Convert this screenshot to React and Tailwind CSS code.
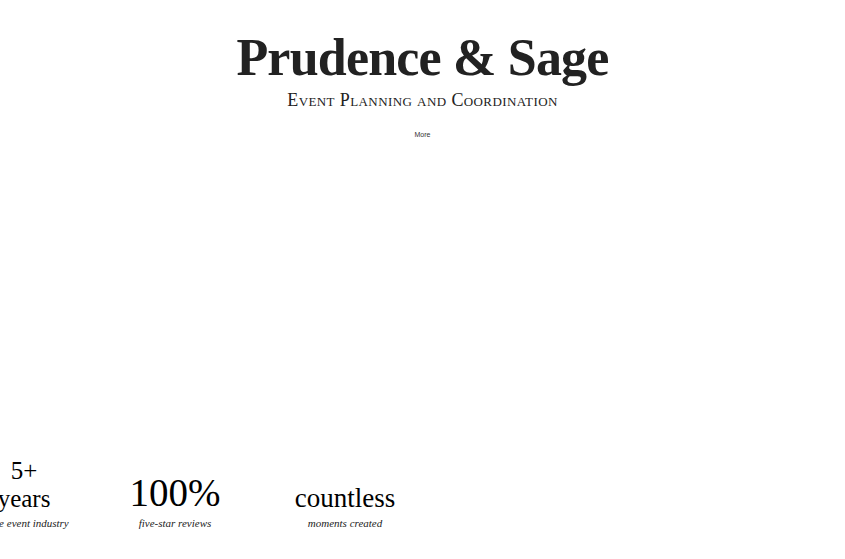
import React from "react";

const stats = [
  { value: ["5+", "years"], caption: "in the event industry", width: "w-[48px]", size: "text-[25px] leading-[28px]", gap: "", pad: "" },
  { value: ["100%"], caption: "five-star reviews", width: "w-[100px]", size: "text-[39px] leading-[40px]", gap: "ml-[77px]", pad: "" },
  { value: ["countless"], caption: "moments created", width: "w-[100px]", size: "text-[27px] leading-[30px]", gap: "ml-[70px]", pad: "" },
];

const App = () => {
  return (
    <div className="w-[845px] h-[559px] bg-white overflow-hidden flex flex-col text-[#222]">
      <header className="flex flex-col items-center pt-[29px]">
        <h1 className="font-['Liberation_Serif',serif] font-bold text-[52px] leading-[58px] tracking-[-0.8px]">
          Prudence &amp; Sage
        </h1>
        <p className="mt-[2px] font-['Liberation_Serif',serif] text-[18px] leading-[22px] [font-variant:small-caps] tracking-[0.4px]">
          Event Planning and Coordination
        </p>
        <a className="mt-[19px] font-['Liberation_Sans',sans-serif] text-[7px] leading-[10px] text-[#333]">
          More
        </a>
      </header>

      <div className="flex-1" />

      {/* stats row */}
      <section className="flex items-end pb-[30px] font-['Liberation_Serif',serif] text-black">
        {stats.map((s) => (
          <div key={s.caption} className={`${s.width} ${s.gap} ${s.pad} flex flex-col items-center`}>
            {s.value.map((v) => (
              <span key={v} className={`${s.size} whitespace-nowrap`}>
                {v}
              </span>
            ))}
            <span className="mt-[4px] italic text-[11px] leading-[12px] whitespace-nowrap text-[#222]">
              {s.caption}
            </span>
          </div>
        ))}
      </section>
    </div>
  );
};

export default App;
